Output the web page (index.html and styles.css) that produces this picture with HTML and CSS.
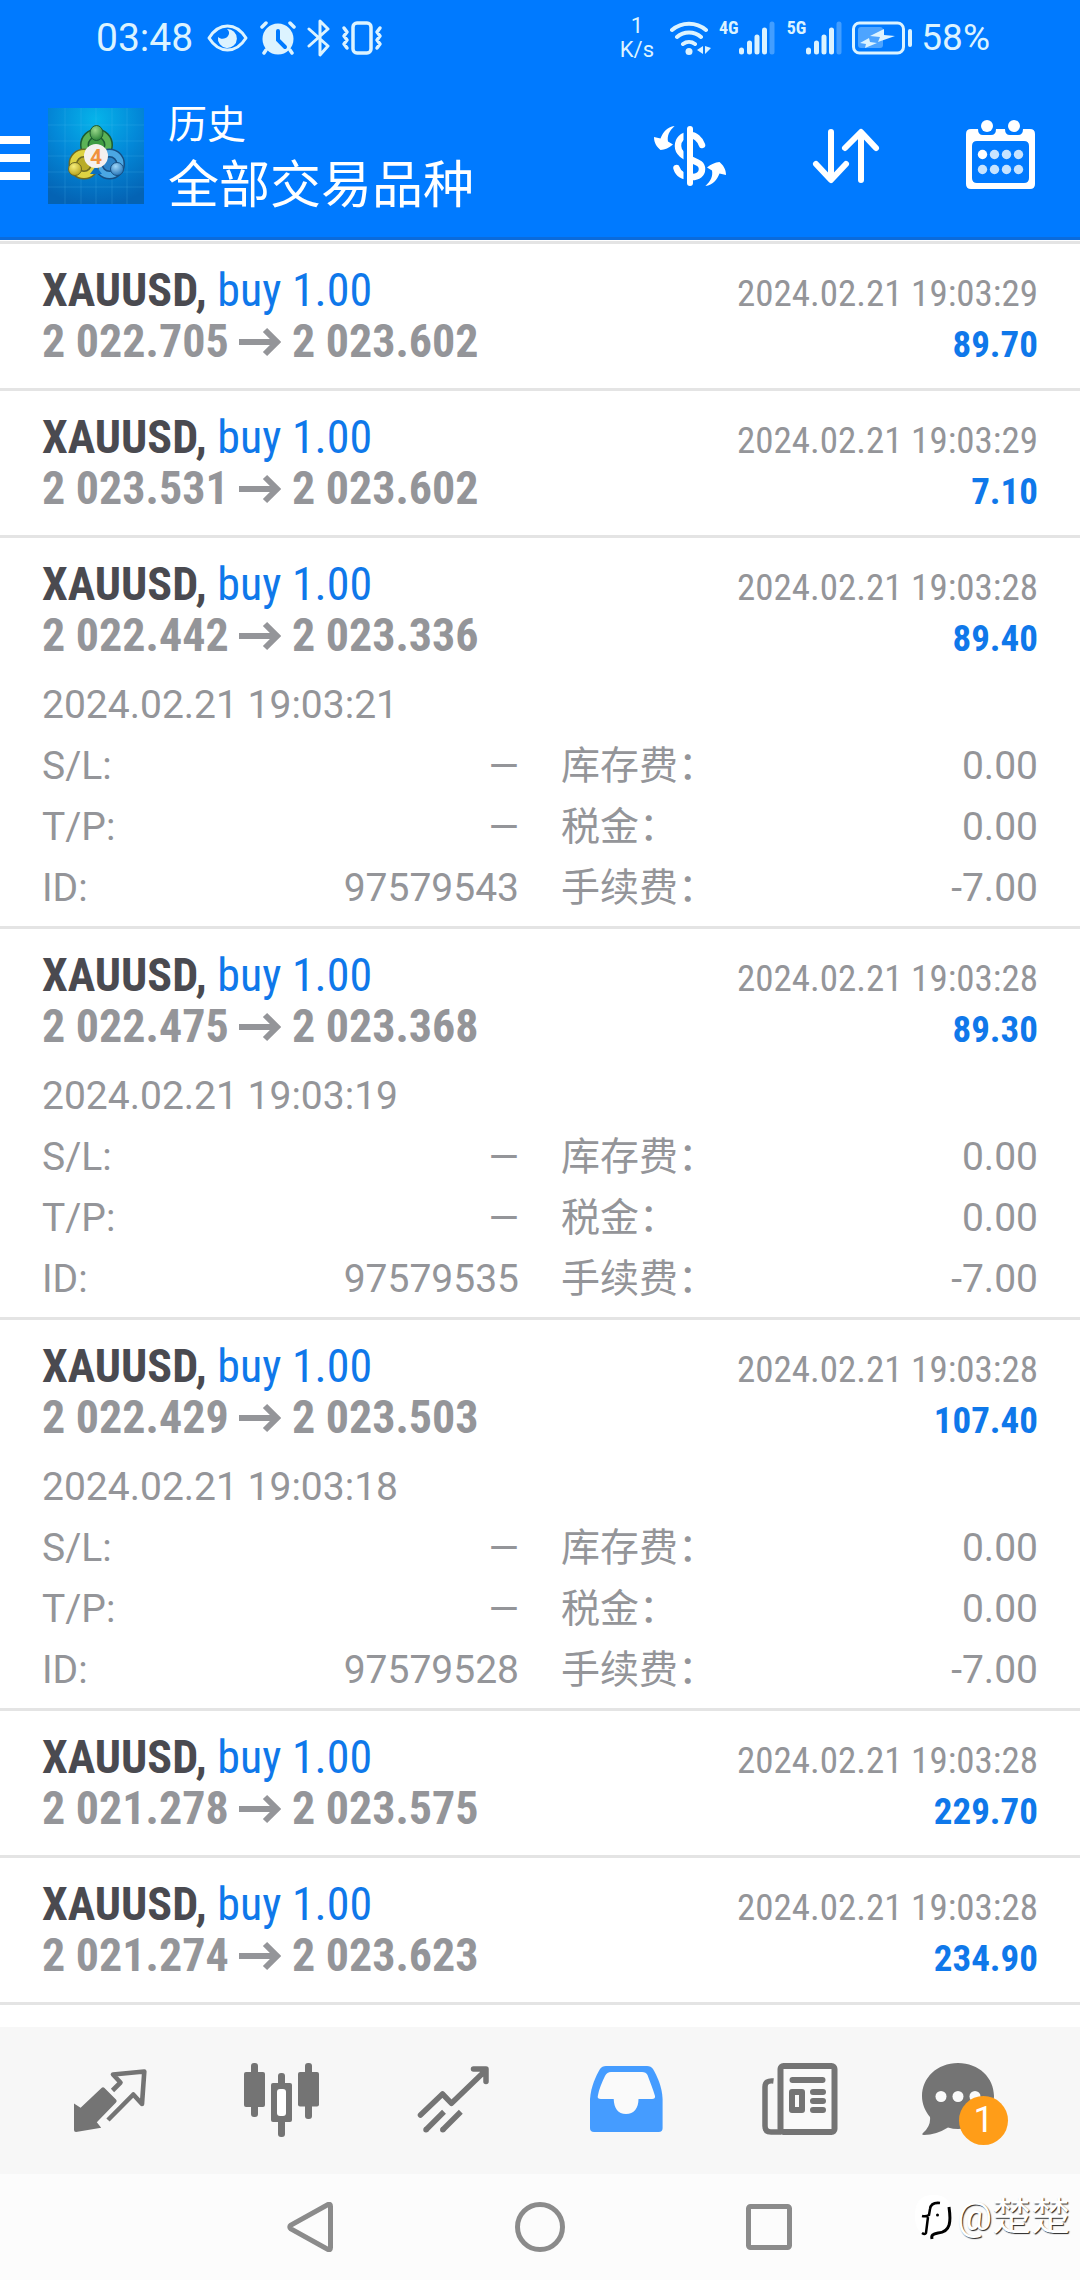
FILE: index.html
```html
<!DOCTYPE html>
<html lang="zh-CN">
<head>
<meta charset="utf-8">
<meta name="viewport" content="width=device-width">
<title>历史</title>
<link rel="stylesheet" href="styles.css">
</head>
<body>
<header class="top">
  <div class="status">
    <span class="clock">03:48</span>
    <svg class="st-eye" width="41" height="30" viewBox="0 0 41 30" fill="none" stroke="currentColor" stroke-width="3"><path d="M2 15C7 7 13 3 20.500 3S34 7 39 15C34 23 28 27 20.500 27S7 23 2 15Z" stroke-linejoin="round"/><path d="M20 6a9.500 9.500 0 1 1-9 8c3 3 8 2 10-1s1-5-1-7Z" fill="currentColor" stroke="none"/></svg>
    <svg class="st-alarm" width="36" height="34" viewBox="0 0 36 34"><circle cx="18" cy="18" r="15.500" fill="currentColor"/><path d="M2 6l4-4M34 6l-4-4M6 29l-2 3M30 29l2 3" stroke="currentColor" stroke-width="3.500" stroke-linecap="round"/><path d="M18 10v9l7 7" fill="none" stroke="#007aff" stroke-width="4" stroke-linecap="round"/></svg>
    <svg class="st-bt" width="23" height="38" viewBox="0 0 23 38" fill="none" stroke="currentColor" stroke-width="3" stroke-linecap="round" stroke-linejoin="round"><path d="M2 10l19 17-8 9V2l8 8L2 27"/></svg>
    <svg class="st-vib" width="42" height="34" viewBox="0 0 42 34" fill="none" stroke="currentColor" stroke-width="3.500" stroke-linecap="round" stroke-linejoin="round"><rect x="12" y="2" width="18" height="30" rx="4"/><path d="M3 7l3 4-3 4 3 4-3 4 3 4M39 7l-3 4 3 4-3 4 3 4-3 4"/></svg>
    <span class="speed"><span>1</span><span>K/s</span></span>
    <svg class="st-wifi" width="41" height="34" viewBox="0 0 41 34" fill="none" stroke="currentColor" stroke-width="4" stroke-linecap="round"><path d="M2 9a26 26 0 0 1 34 0M7 16a18 18 0 0 1 24 0M13 23a10 10 0 0 1 12 0"/><circle cx="19" cy="30.500" r="3.500" fill="currentColor" stroke="none"/><path d="M33 25v8l-6-4ZM35 25v8l6-6Z" fill="currentColor" stroke="none"/></svg>
    <span class="net">4G</span>
    <svg class="st-bars" width="36" height="34" viewBox="0 0 36 34" stroke="currentColor" stroke-width="5" stroke-linecap="round"><path d="M2.500 29v2M10.500 22v9M18 16v15M25.500 9v22"/><path d="M33 3v28" opacity=".3"/></svg>
    <span class="net">5G</span>
    <svg class="st-bars" width="36" height="34" viewBox="0 0 36 34" stroke="currentColor" stroke-width="5" stroke-linecap="round"><path d="M2.500 29v2M10.500 22v9M18 16v15M25.500 9v22"/><path d="M33 3v28" opacity=".3"/></svg>
    <svg class="st-batt" width="61" height="34" viewBox="0 0 61 34"><rect x="1.500" y="2" width="50" height="30" rx="6" fill="none" stroke="currentColor" stroke-width="3"/><rect x="6" y="6" width="25" height="21" rx="3" fill="currentColor" opacity=".35"/><path d="M58 10v14" stroke="currentColor" stroke-width="4" stroke-linecap="round"/><path d="M32 8l-14 7 10 1-2 5 17-6-11-1ZM17 17l-9 5 6 1-1 4 12-5-7-1Z" fill="currentColor"/></svg>
    <span class="percent">58%</span>
  </div>
  <div class="appbar">
    <button class="menu" type="button" aria-label="菜单"><span></span><span></span><span></span></button>
    <svg class="logo" width="96" height="96" viewBox="0 0 96 96">
      <defs>
        <radialGradient id="sky" cx=".5" cy=".12" r=".9"><stop offset="0" stop-color="#06b4ea"/><stop offset=".5" stop-color="#0388d8"/><stop offset="1" stop-color="#0463b4"/></radialGradient>
        <radialGradient id="gr" cx=".4" cy=".3" r=".8"><stop offset="0" stop-color="#9bd98b"/><stop offset="1" stop-color="#1f7a2e"/></radialGradient>
        <radialGradient id="ye" cx=".4" cy=".3" r=".8"><stop offset="0" stop-color="#f6ee7a"/><stop offset="1" stop-color="#b09a12"/></radialGradient>
        <radialGradient id="bl" cx=".4" cy=".3" r=".8"><stop offset="0" stop-color="#9fd6f8"/><stop offset="1" stop-color="#1769b0"/></radialGradient>
      </defs>
      <rect width="96" height="96" fill="url(#sky)"/>
      <path d="M0 17h96M0 33h96M0 48h96M0 64h96M0 79h96M17 0v96M33 0v96M48 0v96M64 0v96M79 0v96" stroke="#5cc4f5" stroke-opacity=".2"/>
      <circle cx="48.500" cy="37" r="12" fill="#3f9c42" stroke="#1d5c31" stroke-width="9"/>
      <circle cx="48.500" cy="37" r="12" fill="none" stroke="#5cb356" stroke-width="6"/>
      <circle cx="61.500" cy="56" r="11" fill="#2c84c8" stroke="#174f83" stroke-width="9"/>
      <circle cx="61.500" cy="56" r="11" fill="none" stroke="#4ba7e3" stroke-width="6"/>
      <circle cx="36" cy="56" r="11" fill="#b9ac28" stroke="#6d6a22" stroke-width="9"/>
      <circle cx="36" cy="56" r="11" fill="none" stroke="#ded343" stroke-width="6"/>
      <path d="M42 66l6-8 6 8Z" fill="#0a6fc0"/>
      <ellipse cx="48.500" cy="25" rx="6.500" ry="7.500" fill="url(#gr)" stroke="#1d5c31"/>
      <circle cx="27" cy="61" r="6.500" fill="url(#ye)" stroke="#6d6a22"/>
      <circle cx="69" cy="61" r="6.500" fill="url(#bl)" stroke="#174f83"/>
      <circle cx="48" cy="48" r="12" fill="#f4f1ef"/>
      <text class="logo-num" x="48" y="56" text-anchor="middle">4</text>
    </svg>
    <div class="titles"><p class="section">历史</p><h1 class="symbol-filter">全部交易品种</h1></div>
    <div class="actions">
      <button type="button" aria-label="货币"><svg width="72" height="72" viewBox="0 0 72 72"><path d="M48 25C46 19 41 15 36 15 28 15 24 20 24 26c0 7 6 10 12 13s12 4 12 10c0 5-4 8-10 8-9 0-14-4-15.500-9" fill="none" stroke="currentColor" stroke-width="6.500" stroke-linecap="round"/><path d="M31.500 6v60" stroke="#007aff" stroke-width="4"/><path d="M36 9v54" stroke="currentColor" stroke-width="6" stroke-linecap="round"/><g fill="currentColor"><path id="sw" d="M20.600 6C15 11 13 16 14 21.500l5 3C15 28 11 29.500 6.500 30 3 27 0 23 0 17l6.500 1.500C9 12 13 7 20.600 6Z"/><use href="#sw" transform="rotate(180 36 36)"/></g></svg></button>
      <button type="button" aria-label="排序"><svg width="72" height="72" viewBox="0 0 72 72" fill="none" stroke="currentColor" stroke-width="6" stroke-linecap="round" stroke-linejoin="round"><path d="M21 12v47M6 44l15 16 15-16M51 60V13M35 28l16-16 15 16"/></svg></button>
      <button type="button" aria-label="日历"><svg width="72" height="72" viewBox="0 0 72 72"><path fill="currentColor" fill-rule="evenodd" d="M5 9H12q0 6 5 6h8q5 0 5-6h9q0 6 5 6h8q5 0 5-6h7q5 0 5 5v50q0 5-5 5H5q-5 0-5-5V14q0-5 5-5Zm6 12q-5 0-5 5v32q0 5 5 5h47q5 0 5-5V26q0-5-5-5Z"/><g fill="currentColor"><circle cx="21" cy="6" r="6"/><circle cx="48" cy="6" r="6"/><circle cx="16.500" cy="34.500" r="4.700"/></g><g fill="#c6e3ff"><circle cx="28.500" cy="34.500" r="4.700"/><circle cx="40.500" cy="34.500" r="4.700"/><circle cx="52.500" cy="34.500" r="4.700"/><circle cx="16.500" cy="49.500" r="4.700"/><circle cx="28.500" cy="49.500" r="4.700"/><circle cx="40.500" cy="49.500" r="4.700"/><circle cx="52.500" cy="49.500" r="4.700"/></g></svg></button>
    </div>
  </div>
</header>

<main>
<ul class="deals">
  <li class="deal">
    <div class="line"><span class="name"><b>XAUUSD,</b> <span class="side">buy 1.00</span></span><time class="when">2024.02.21 19:03:29</time></div>
    <div class="line"><span class="price">2 022.705 <svg class="arrow" viewBox="0 0 42 30"><path d="M0 15h37M26 3l12 12-12 12"/></svg> 2 023.602</span><span class="profit">89.70</span></div>
  </li>
  <li class="deal">
    <div class="line"><span class="name"><b>XAUUSD,</b> <span class="side">buy 1.00</span></span><time class="when">2024.02.21 19:03:29</time></div>
    <div class="line"><span class="price">2 023.531 <svg class="arrow" viewBox="0 0 42 30"><path d="M0 15h37M26 3l12 12-12 12"/></svg> 2 023.602</span><span class="profit">7.10</span></div>
  </li>
  <li class="deal open">
    <div class="line"><span class="name"><b>XAUUSD,</b> <span class="side">buy 1.00</span></span><time class="when">2024.02.21 19:03:28</time></div>
    <div class="line"><span class="price">2 022.442 <svg class="arrow" viewBox="0 0 42 30"><path d="M0 15h37M26 3l12 12-12 12"/></svg> 2 023.336</span><span class="profit">89.40</span></div>
    <div class="details">
      <time class="opened">2024.02.21 19:03:21</time>
      <dl class="facts"><div><dt>S/L:</dt><dd>—</dd></div><div><dt>库存费：</dt><dd>0.00</dd></div><div><dt>T/P:</dt><dd>—</dd></div><div><dt>税金：</dt><dd>0.00</dd></div><div><dt>ID:</dt><dd>97579543</dd></div><div><dt>手续费：</dt><dd>-7.00</dd></div></dl>
    </div>
  </li>
  <li class="deal open">
    <div class="line"><span class="name"><b>XAUUSD,</b> <span class="side">buy 1.00</span></span><time class="when">2024.02.21 19:03:28</time></div>
    <div class="line"><span class="price">2 022.475 <svg class="arrow" viewBox="0 0 42 30"><path d="M0 15h37M26 3l12 12-12 12"/></svg> 2 023.368</span><span class="profit">89.30</span></div>
    <div class="details">
      <time class="opened">2024.02.21 19:03:19</time>
      <dl class="facts"><div><dt>S/L:</dt><dd>—</dd></div><div><dt>库存费：</dt><dd>0.00</dd></div><div><dt>T/P:</dt><dd>—</dd></div><div><dt>税金：</dt><dd>0.00</dd></div><div><dt>ID:</dt><dd>97579535</dd></div><div><dt>手续费：</dt><dd>-7.00</dd></div></dl>
    </div>
  </li>
  <li class="deal open">
    <div class="line"><span class="name"><b>XAUUSD,</b> <span class="side">buy 1.00</span></span><time class="when">2024.02.21 19:03:28</time></div>
    <div class="line"><span class="price">2 022.429 <svg class="arrow" viewBox="0 0 42 30"><path d="M0 15h37M26 3l12 12-12 12"/></svg> 2 023.503</span><span class="profit">107.40</span></div>
    <div class="details">
      <time class="opened">2024.02.21 19:03:18</time>
      <dl class="facts"><div><dt>S/L:</dt><dd>—</dd></div><div><dt>库存费：</dt><dd>0.00</dd></div><div><dt>T/P:</dt><dd>—</dd></div><div><dt>税金：</dt><dd>0.00</dd></div><div><dt>ID:</dt><dd>97579528</dd></div><div><dt>手续费：</dt><dd>-7.00</dd></div></dl>
    </div>
  </li>
  <li class="deal">
    <div class="line"><span class="name"><b>XAUUSD,</b> <span class="side">buy 1.00</span></span><time class="when">2024.02.21 19:03:28</time></div>
    <div class="line"><span class="price">2 021.278 <svg class="arrow" viewBox="0 0 42 30"><path d="M0 15h37M26 3l12 12-12 12"/></svg> 2 023.575</span><span class="profit">229.70</span></div>
  </li>
  <li class="deal">
    <div class="line"><span class="name"><b>XAUUSD,</b> <span class="side">buy 1.00</span></span><time class="when">2024.02.21 19:03:28</time></div>
    <div class="line"><span class="price">2 021.274 <svg class="arrow" viewBox="0 0 42 30"><path d="M0 15h37M26 3l12 12-12 12"/></svg> 2 023.623</span><span class="profit">234.90</span></div>
  </li>
</ul>
</main>

<nav class="tabs">
  <a href="#quotes" aria-label="行情"><svg width="96" height="84" viewBox="0 0 96 84"><path d="M12 44.500l6.600 4.200L39.500 29q1.500-1.500 3 0L54 40.500q1.500 1.500 0 3L34.800 63.300l4.400 5.400L14 73q-2 0-2-2Z" fill="currentColor"/><path d="M50.500 31.500l8-8-7.500-8 31.300-3L80 45l-8.700-9.500L46 61" fill="none" stroke="currentColor" stroke-width="4.600" stroke-linejoin="round"/></svg></a>
  <a href="#charts" aria-label="图表"><svg width="96" height="84" viewBox="0 0 96 84"><g fill="currentColor"><rect x="10" y="13" width="21" height="35" rx="2"/><rect x="17" y="4" width="7" height="54" rx="3"/><rect x="64" y="13" width="21" height="34.500" rx="2"/><rect x="71" y="4" width="7" height="56" rx="3"/><rect x="44" y="14" width="7" height="64" rx="3"/><rect x="37" y="24" width="21" height="39" rx="2"/></g><rect x="43" y="30" width="9" height="27" rx="3" fill="#fff"/></svg></a>
  <a href="#trade" aria-label="交易"><svg width="96" height="84" viewBox="0 0 96 84" fill="none" stroke="currentColor" stroke-width="5.500" stroke-linejoin="round"><path d="M14.500 56L36.500 35l9 9.300L79 12M67.500 10H80v12.500" stroke-linecap="round"/><path d="M20 70.700l18-18M36.800 70.700l18-18"/><path d="M20 70.700h.01M36.800 70.700h.01" stroke-linecap="round"/></svg></a>
  <a class="current" href="#history" aria-label="历史" aria-current="page"><svg width="96" height="84" viewBox="0 0 96 84"><path fill="currentColor" d="M12 40C13 27 18 17 22 10q2-3 6-3h41q4 0 6 3c4 7 9 17 9.600 30v29q0 4-4 4H16q-4 0-4-4Z"/><path fill="#fafafa" d="M33 13h31q4 0 5.500 3C72 23 75 30 77 37q.5 3-3 3H60.500C60.500 49 56 55 48 55S36 49 35.700 40H23q-4 0-3.200-3C21 30 24 23 27 17q2-4 6-4Z"/></svg></a>
  <a href="#news" aria-label="新闻"><svg width="96" height="84" viewBox="0 0 96 84"><rect x="30.500" y="7" width="54" height="66" rx="3" fill="#fafafa" stroke="currentColor" stroke-width="6"/><path d="M23.500 22Q15 21 15 28v39q0 6 6 6h10" fill="none" stroke="currentColor" stroke-width="5.500"/><path d="M42.500 21h30M63 33h10M63 42h10M63 51h10" stroke="currentColor" stroke-width="6" stroke-linecap="round"/><path fill="currentColor" fill-rule="evenodd" d="M42 30h10q3 0 3 3v18q0 3-3 3H42q-3 0-3-3V33q0-3 3-3Zm3 6v12h4V36Z"/></svg></a>
  <a href="#messages" aria-label="消息"><span class="chat"><svg width="96" height="84" viewBox="0 0 96 84"><path fill="currentColor" d="M36 4C57 4 72 19 72 37S57 70 36 70q-5 0-10-1.500Q14 76 2 76q-3 0-1-2 8-7 7-16C3 52 0 45 0 37 0 19 15 4 36 4Z"/><g fill="#fafafa"><circle cx="19" cy="37.500" r="5.500"/><circle cx="36" cy="37.500" r="5.500"/><circle cx="53" cy="37.500" r="5.500"/></g></svg><span class="badge">1</span></span></a>
</nav>

<footer class="keys">
  <button type="button" aria-label="返回"><svg width="50" height="50" viewBox="0 0 50 50"><path d="M43 2.500q2.500-1 2.500 2v41q0 3-2.500 2L6 27q-2.500-2 0-4Z"/></svg></button>
  <button type="button" aria-label="主页"><svg width="50" height="50" viewBox="0 0 50 50"><circle cx="25" cy="25" r="22.500"/></svg></button>
  <button type="button" aria-label="最近任务"><svg width="50" height="50" viewBox="0 0 50 50"><rect x="3.500" y="4.500" width="41" height="41" rx="2"/></svg></button>
  <div class="credit"><svg width="40" height="46" viewBox="0 0 40 46"><path d="M20 1C34 1 38 8 38 20c0 14-4 20-18 24C6 40 2 34 2 22S6 1 20 1Z" fill="#fff"/><path d="M27 9q-9-1-10 6l-1 6q-3 2-7 1M15 23l-2 16q-1 2-4 0" fill="none" stroke="#000" stroke-width="2.500"/><path d="M36 13c2 14 2 25-11 26-5 1-7 2-6 6" fill="none" stroke="#000" stroke-width="3"/><circle cx="24.500" cy="21" r="1.500"/></svg><span>@楚楚</span></div>
</footer>
</body>
</html>
```
FILE: styles.css
```css
* { box-sizing: border-box; margin: 0; padding: 0; }

body {
  min-height: 100vh;
  display: flex;
  flex-direction: column;
  background: #fff;
  color: #949599;
  font-family: Roboto, "Noto Sans CJK SC", sans-serif;
}

button { border: 0; background: none; color: inherit; font: inherit; }
svg { display: block; flex: none; }

/* Top bar */
.top {
  background: #007aff;
  color: #fff;
  box-shadow: inset 0 -3px #0b6bdb;
}
.status {
  height: 72px;
  padding: 3px 90px 0 96px;
  display: flex;
  align-items: center;
  color: #dcf3ff;
}
.clock { font-size: 39px; line-height: 48px; }
.st-eye { margin-left: 14px; }
.st-alarm { margin-left: 12px; }
.st-bt, .st-vib { margin-left: 11px; }
.speed {
  margin-left: auto;
  display: flex;
  flex-direction: column;
  align-items: center;
  font-size: 22px;
  line-height: 24px;
}
.st-wifi { margin-left: 16px; }
.net {
  align-self: flex-start;
  margin: 14px 0 0 8px;
  font: bold 18px/21px "Roboto Condensed", "Liberation Sans Narrow", Roboto, sans-serif;
}
.st-bars + .net { margin-left: 12px; }
.st-batt { margin-left: 10px; }
.percent { margin-left: 8px; font-size: 37px; line-height: 48px; }

.appbar {
  height: 168px;
  padding-right: 42px;
  display: flex;
  align-items: center;
}
.menu {
  width: 30px;
  margin: 4px 18px 0 0;
  display: flex;
  flex-direction: column;
  gap: 10px;
}
.menu span { height: 8px; background: #fff; }
.logo-num { font: bold 21px Roboto, sans-serif; fill: #f0923c; }
.titles { margin-left: 24px; padding-top: 6px; }
.section { font-size: 39px; line-height: 54px; }
.symbol-filter { font-size: 51px; line-height: 68px; font-weight: 400; }
.actions { margin-left: auto; display: flex; gap: 84px; }

/* Deals */
main { flex: 1; padding-top: 1px; }
.deals { list-style: none; border-top: 3px solid #e4e4e4; }
.deal { padding: 21px 42px; border-bottom: 3px solid #e4e4e4; }
.deal.open { padding-bottom: 7px; }
.line {
  display: flex;
  justify-content: space-between;
  align-items: baseline;
  font: 46px/51px "Roboto Condensed", "Liberation Sans Narrow", Roboto, sans-serif;
}
.name b { color: #4a4a50; }
.side, .profit { color: #0f78ea; }
.price { font-weight: 700; }
.arrow {
  display: inline-block;
  width: 42px;
  height: 30px;
  fill: none;
  stroke: currentColor;
  stroke-width: 6;
}
.when, .profit { font-size: 37px; line-height: 42px; }
.profit { font-weight: 700; }

.details { margin-top: 14px; font-size: 39px; line-height: 61px; }
.opened { display: block; }
.facts { display: grid; grid-template-columns: 1fr 1fr; column-gap: 42px; }
.facts div { display: flex; justify-content: space-between; }

/* Bottom tabs */
.tabs {
  height: 147px;
  padding: 0 24px;
  display: grid;
  grid-template-columns: repeat(6, 1fr);
  align-items: center;
  justify-items: center;
  background: #f7f7f7;
}
.tabs a { color: #747474; text-decoration: none; }
.tabs .current { color: #459cff; }
.chat { position: relative; display: block; }
.badge {
  position: absolute;
  left: 37px;
  top: 37px;
  width: 49px;
  height: 49px;
  border-radius: 50%;
  background: #ff9d18;
  color: #fff;
  font-size: 36px;
  line-height: 49px;
  text-align: center;
}

/* System keys */
.keys {
  position: relative;
  height: 106px;
  display: flex;
  justify-content: center;
  align-items: center;
  background: #fcfcfc;
}
.keys button { width: 230px; display: grid; place-items: center; }
.keys button svg { fill: none; stroke: #8b8b8b; stroke-width: 5; }
.credit {
  position: absolute;
  right: 10px;
  top: 20px;
  display: flex;
  align-items: center;
  gap: 4px;
  color: #fff;
  font-size: 39px;
  line-height: 46px;
  text-shadow: 1px 1px 1px #222;
}
```
